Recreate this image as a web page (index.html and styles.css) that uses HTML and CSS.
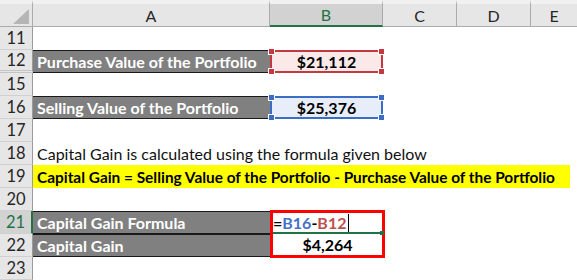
FILE: index.html
```html
<!DOCTYPE html>
<html>
<head>
<meta charset="utf-8">
<link rel="stylesheet" href="styles.css">
</head>
<body>
<div class="sheet">
  <div class="corner"><svg class="tri" width="16" height="15" viewBox="0 0 16 15"><polygon points="16,0 16,15 0,15" fill="#b5b5b5"/></svg></div>
  <div class="colh">A</div>
  <div class="colh sel">B</div>
  <div class="colh">C</div>
  <div class="colh">D</div>
  <div class="colh last">E</div>

  <div class="rowh">11</div>
  <div class="cell"></div><div class="cell"></div><div class="cell"></div><div class="cell"></div><div class="cell"></div>

  <div class="rowh hidden-after">12</div>
  <div class="cell label">Purchase Value of the Portfolio</div>
  <div class="cell value red">$21,112<span class="h tl"></span><span class="h tr"></span><span class="h bl"></span><span class="h br"></span></div>
  <div class="cell"></div><div class="cell"></div><div class="cell"></div>

  <div class="rowh">15</div>
  <div class="cell"></div><div class="cell"></div><div class="cell"></div><div class="cell"></div><div class="cell"></div>

  <div class="rowh">16</div>
  <div class="cell label">Selling Value of the Portfolio</div>
  <div class="cell value blue">$25,376<span class="h tl"></span><span class="h tr"></span><span class="h bl"></span><span class="h br"></span></div>
  <div class="cell"></div><div class="cell"></div><div class="cell"></div>

  <div class="rowh">17</div>
  <div class="cell"></div><div class="cell"></div><div class="cell"></div><div class="cell"></div><div class="cell"></div>

  <div class="rowh">18</div>
  <div class="cell wide plain">Capital Gain is calculated using the formula given below</div>

  <div class="rowh">19</div>
  <div class="cell wide"><span class="hl">Capital Gain = Selling Value of the Portfolio - Purchase Value of the Portfolio</span></div>

  <div class="rowh">20</div>
  <div class="cell"></div><div class="cell"></div><div class="cell"></div><div class="cell"></div><div class="cell"></div>

  <div class="rowh active">21</div>
  <div class="cell label top">Capital Gain Formula</div>
  <div class="calc">
    <div class="f-row"><span>=</span><span class="ref-b">B16</span><span>-</span><span class="ref-r">B12</span><span class="caret"></span><span class="fill"></span></div>
    <div class="v-row">$4,264</div>
  </div>
  <div class="cell"></div><div class="cell"></div><div class="cell"></div>

  <div class="rowh">22</div>
  <div class="cell label">Capital Gain</div>
  <div class="cell"></div><div class="cell"></div><div class="cell"></div>

  <div class="rowh">23</div>
  <div class="cell"></div><div class="cell"></div><div class="cell"></div><div class="cell"></div><div class="cell"></div>
</div>
</body>
</html>
```
FILE: styles.css
```css
html, body {
  margin: 0;
  padding: 0;
  background: #fff;
  overflow: hidden;
}
.sheet {
  display: grid;
  grid-template-columns: 33px 237px 113px 74px 74px 46px;
  grid-template-rows: 27px repeat(11, 23px);
  width: 577px;
  height: 280px;
  font-family: Lato, "Open Sans", sans-serif;
  font-size: 16px;
  color: #000;
}
.corner {
  background: #e6e6e6;
  border-top: 4px solid #f1f1f1;
  border-right: 1px solid #ababab;
  border-bottom: 1px solid #ababab;
  box-sizing: border-box;
  display: flex;
  align-items: flex-end;
  justify-content: flex-end;
  padding: 0 3px 2px 0;
}
.colh {
  background: #e6e6e6;
  border-top: 4px solid #f1f1f1;
  border-right: 1px solid #ababab;
  border-bottom: 1px solid #ababab;
  box-sizing: border-box;
  display: flex;
  align-items: center;
  justify-content: center;
  font-size: 16px;
  color: #262626;
}
.colh.last { border-right: none; }
.colh.sel {
  background: #d2d2d2;
  color: #217346;
  border-bottom: 2px solid #217346;
}
.rowh {
  background: #e6e6e6;
  border-right: 1px solid #9b9b9b;
  border-bottom: 1px solid #d0d0d0;
  box-sizing: border-box;
  display: flex;
  align-items: center;
  justify-content: center;
  font-size: 16.5px;
  color: #262626;
}
.rowh.hidden-after { border-bottom: 3px double #c4c4c4; }
.rowh.active {
  background: #d2d2d2;
  color: #217346;
  border-right: 2px solid #217346;
}
.cell {
  box-sizing: border-box;
  display: flex;
  align-items: center;
  white-space: nowrap;
  position: relative;
}
.label {
  background: #808080;
  color: #fff;
  font-weight: 700;
  padding-left: 4px;
  border-top: 1px solid #1a1a1a;
  border-bottom: 1px solid #1a1a1a;
}
.label.top { border-bottom: 1px solid #1a1a1a; }
.wide { grid-column: 2 / 7; padding-left: 4px; }
.plain { color: #111; }
.hl {
  background: #ffff00;
  font-weight: 700;
  font-size: 15.4px;
  display: flex;
  align-items: center;
  height: 100%;
  margin-left: -4px;
  padding-left: 4px;
  width: 533px;
}
.value {
  justify-content: center;
  font-weight: 700;
  border: 2px solid;
}
.value.red { background: #fbe9ea; border-color: #c4393f; }
.value.blue { background: #e8eef9; border-color: #3a6dc4; }
.h {
  position: absolute;
  width: 5px;
  height: 5px;
  border: 1px solid #fff;
}
.red .h { background: #c4393f; }
.blue .h { background: #3a6dc4; }
.h.tl { left: -4px; top: -4px; }
.h.tr { right: -4px; top: -4px; }
.h.bl { left: -4px; bottom: -4px; }
.h.br { right: -4px; bottom: -4px; }
.calc {
  grid-row: span 2;
  border: 3px solid #ff0000;
  margin: -1px -2px -1px 0;
  display: grid;
  grid-template-rows: 1fr 1fr;
  font-weight: 700;
  position: relative;
  z-index: 1;
}
.f-row {
  display: flex;
  align-items: center;
  padding-left: 0;
  border-bottom: 2px solid #217346;
  position: relative;
}
.ref-b { color: #4472c4; }
.ref-r { color: #c0504d; }
.caret {
  width: 1px;
  height: 18px;
  background: #000;
  margin-left: 2px;
}
.fill {
  position: absolute;
  right: -2px;
  bottom: -3px;
  width: 4px;
  height: 4px;
  background: #217346;
}
.v-row {
  display: flex;
  align-items: center;
  justify-content: center;
}
```
